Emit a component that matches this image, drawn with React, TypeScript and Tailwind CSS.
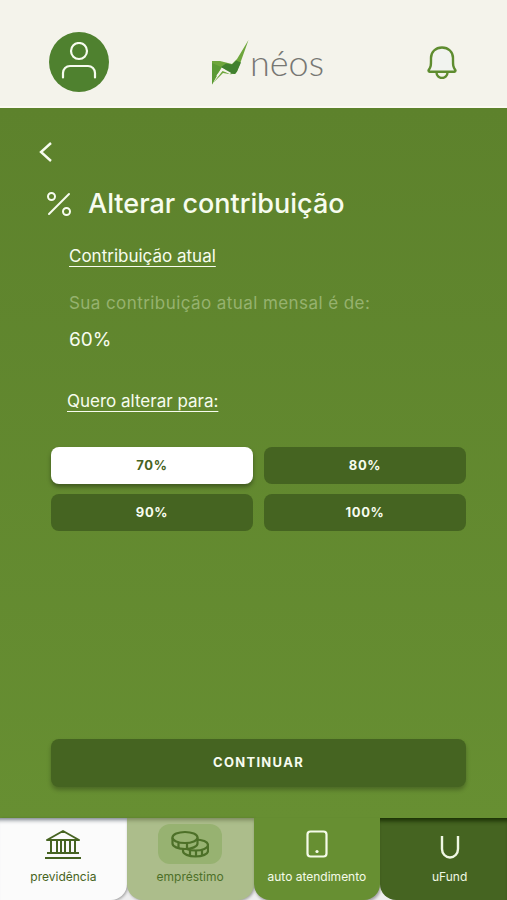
import { useState } from 'react'

const options = ['70%', '80%', '90%', '100%']

function Logo() {
  return (
    <a href="#" className="flex items-center gap-px text-[#777773]">
      <svg width="37" height="45" viewBox="0 0 37 45" aria-hidden="true">
        <path d="M0 21h8l12 3 5-5L36.500 0 29 21l-4 10.500-2 2.500-5-.5-8-6.500L0 44.500Z" fill="#6ea63c" />
        <path d="M9 27 14 23.500l6 1 4-4 5 2-4 9-2 2.500-5-.5Z" fill="#41802f" />
        <path d="m0 44.500 9-17.500-9-4Z" fill="#5b9a35" />
        <path d="m1 43 9.500-12 9.500 3.500-9-1.500Z" fill="#6ea63c" />
        <path d="m5 36 5.500-7 8 4.500" fill="none" stroke="#f4f3eb" strokeWidth="1.600" />
      </svg>
      <span className="font-['Lato',sans-serif] text-4xl font-light">néos</span>
    </a>
  )
}

function UserIcon() {
  return (
    <svg width="36" height="40" viewBox="0 0 36 40" fill="none" stroke="currentColor" strokeWidth="2.200" strokeLinecap="round">
      <circle cx="18" cy="8" r="8" transform="translate(0 1)" />
      <path d="M2 35.500V31a7 7 0 0 1 7-7h18a7 7 0 0 1 7 7v4.500" />
    </svg>
  )
}

function BellIcon() {
  return (
    <svg width="30" height="33" viewBox="0 0 30 33" fill="none" stroke="currentColor" strokeWidth="2.400" strokeLinejoin="round">
      <path d="M15 1.500C8.500 1.500 4 6 4 12c0 7 .3 8-2.500 12.500 0 .8.500 1.200 1 1.200h25c.5 0 1-.4 1-1.200C25.700 20 26 19 26 12c0-6-4.500-10.500-11-10.500Z" fill="#f1f3ef" />
      <path d="M9.500 26v.5a5.500 5.500 0 0 0 11 0V26" />
    </svg>
  )
}

function BankIcon() {
  return (
    <svg width="36" height="31" viewBox="0 0 36 31" fill="none" stroke="currentColor" strokeWidth="2" strokeLinejoin="round">
      <path d="M2 11 18 2l16 9ZM6 11v13M12 11v13M16 11v13M20 11v13M25 11v13M30 11v13" />
      <path d="M2 24h32M0 29h36" />
    </svg>
  )
}

function CoinsIcon() {
  return (
    <svg width="38" height="28" viewBox="0 0 38 28" fill="#97b271" stroke="currentColor" strokeWidth="2.200">
      <path d="M12 15v6c0 3 5.500 5.500 12.500 5.500S37 24 37 21v-6" />
      <ellipse cx="24.500" cy="15" rx="12.500" ry="5.500" />
      <path d="M19 20v6M25 20.500v6M31 19.500v6" />
      <path d="M1.500 7.500v6c0 3 5.500 5.500 12.500 5.500s12.500-2.500 12.500-5.500v-6" />
      <ellipse cx="14" cy="7.500" rx="12.500" ry="5.500" />
      <path d="M7.500 12.500v6M16 13v6" />
    </svg>
  )
}

function TabletIcon() {
  return (
    <svg width="22" height="28" viewBox="0 0 22 28" fill="none" stroke="currentColor" strokeWidth="2.200">
      <rect x="1.500" y="1.500" width="19" height="25" rx="3" />
      <circle cx="11" cy="21.500" r="1.600" fill="currentColor" stroke="none" />
    </svg>
  )
}

function UIcon() {
  return (
    <svg width="20" height="32" viewBox="0 0 20 32" fill="none" stroke="currentColor" strokeWidth="2.400">
      <path d="M2 8v13a8 8.500 0 0 0 16 0V8" />
    </svg>
  )
}

const tabs = [
  { label: 'previdência', icon: <BankIcon />, style: 'rounded-br-2xl bg-[#fbfbfb] text-[#466321] shadow-[inset_0_6px_4px_-4px_#777f88,1px_1px_3px_#00000055]' },
  { label: 'empréstimo', icon: <CoinsIcon />, style: 'rounded-b-2xl bg-[#acbd8b] text-[#4d7028] shadow-[inset_0_6px_4px_-4px_#7a875c,1px_1px_3px_#00000055]', pill: true },
  { label: 'auto atendimento', icon: <TabletIcon />, style: 'rounded-b-2xl bg-[#678f32] text-[#f5fbe9] shadow-[1px_2px_3px_#00000055]' },
  { label: 'uFund', icon: <UIcon />, style: 'rounded-bl-2xl bg-[#456421] pl-3 text-[#f0f8e4] shadow-[inset_0_6px_4px_-3px_#1b3005]' },
]

export default function App() {
  const [selected, setSelected] = useState('70%')

  return (
    <div className="flex min-h-screen flex-col bg-[#eeeeef] font-['Inter',sans-serif] text-[#f7fcef]">
      <header className="flex h-[108px] items-center justify-between border-b-2 border-[#fbf9f1] bg-[#f4f3eb] pt-[18px] pr-[50px] pl-[49px]">
        <button aria-label="Perfil" className="flex size-[60px] items-center justify-center rounded-full bg-[#4f812f]">
          <UserIcon />
        </button>
        <Logo />
        <button aria-label="Notificações" className="text-[#5e8c2f]">
          <BellIcon />
        </button>
      </header>

      <main className="flex flex-1 flex-col bg-linear-to-b from-[#5d822c] to-[#678f32] pt-[34px] pr-[41px] pb-[31px] pl-[51px]">
        <button aria-label="Voltar" className="-ml-3 self-start">
          <svg width="13" height="20" viewBox="0 0 13 20" fill="none" stroke="currentColor" strokeWidth="2.400">
            <path d="M12 1 2 10l10 9" />
          </svg>
        </button>

        <div className="-ml-1 mt-[26px] flex items-center gap-[17px]">
          <svg width="24" height="24" viewBox="0 0 24 24" fill="none" stroke="currentColor" strokeWidth="2" strokeLinecap="round">
            <circle cx="4.500" cy="4.500" r="3.500" />
            <circle cx="19.500" cy="19.500" r="3.500" />
            <path d="M22 2 2 22" />
          </svg>
          <h1 className="text-[27px] leading-8 font-medium">Alterar contribuição</h1>
        </div>

        <section className="mt-6 pl-[18px]">
          <h2 className="text-[17px] leading-6 underline underline-offset-4">Contribuição atual</h2>
          <p className="mt-[23px] text-[17px] leading-6 tracking-wide text-[#96b26e]">Sua contribuição atual mensal é de:</p>
          <p className="mt-[13px] text-[19px] leading-6">60%</p>
        </section>

        <h2 className="mt-[37px] pl-4 text-[17px] leading-6 underline underline-offset-4">Quero alterar para:</h2>
        <div className="mt-[34px] grid grid-cols-2 gap-x-[11px] gap-y-[10px]">
          {options.map(option => (
            <button
              key={option}
              aria-pressed={option === selected}
              onClick={() => setSelected(option)}
              className={`h-[37px] rounded-lg text-[13px] font-bold tracking-wider ${
                option === selected ? 'bg-white text-[#466321] shadow-[0_3px_4px_#00000059]' : 'bg-[#456421]'
              }`}
            >
              {option}
            </button>
          ))}
        </div>

        <button className="mt-auto h-12 rounded-lg bg-[#456421] text-[13px] font-bold tracking-widest shadow-[0_3px_4px_#00000040]">
          CONTINUAR
        </button>
      </main>

      <nav className="grid h-[82px] grid-cols-4">
        {tabs.map(tab => (
          <a key={tab.label} href="#" className={`flex flex-col items-center pt-[6px] text-xs ${tab.style}`}>
            <span className={`flex h-10 w-16 items-center justify-center rounded-xl ${tab.pill ? 'bg-[#97b271]' : ''}`}>
              {tab.icon}
            </span>
            <span className="mt-[3px] leading-5 whitespace-nowrap">{tab.label}</span>
          </a>
        ))}
      </nav>
    </div>
  )
}
